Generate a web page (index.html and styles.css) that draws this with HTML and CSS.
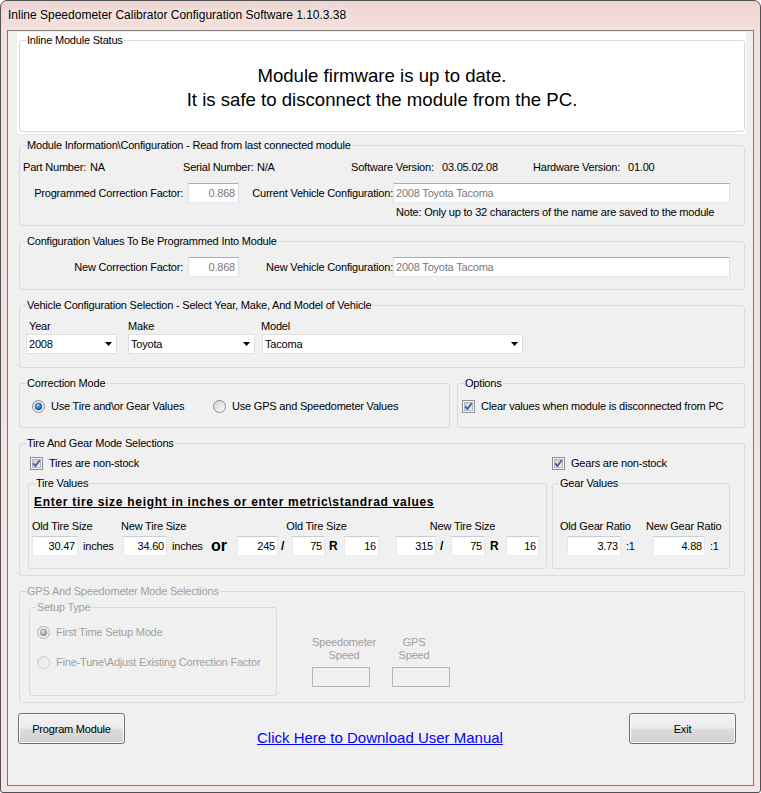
FILE: index.html
```html
<!DOCTYPE html>
<html>
<head>
<meta charset="utf-8">
<title>Inline Speedometer Calibrator Configuration Software</title>
<link rel="stylesheet" href="styles.css">
</head>
<body>
<svg class="defs" width="0" height="0" aria-hidden="true">
  <defs>
    <linearGradient id="cbFill" x1="0" y1="0" x2="1" y2="1">
      <stop offset="0" stop-color="#c4cad3"/>
      <stop offset="1" stop-color="#f2f4f7"/>
    </linearGradient>
    <linearGradient id="rbFill" x1="0" y1="0" x2="1" y2="1">
      <stop offset="0" stop-color="#d2d2d2"/>
      <stop offset="1" stop-color="#fcfcfc"/>
    </linearGradient>
    <linearGradient id="rbFillDis" x1="0" y1="0" x2="1" y2="1">
      <stop offset="0" stop-color="#e2e2e2"/>
      <stop offset="1" stop-color="#f8f8f8"/>
    </linearGradient>
    <radialGradient id="rbDot" cx="0.38" cy="0.32" r="0.75">
      <stop offset="0" stop-color="#9fdcfb"/>
      <stop offset="0.45" stop-color="#3b88d0"/>
      <stop offset="1" stop-color="#123f86"/>
    </radialGradient>
    <radialGradient id="rbDotDis" cx="0.38" cy="0.32" r="0.75">
      <stop offset="0" stop-color="#e4e4e4"/>
      <stop offset="0.5" stop-color="#b4b4b4"/>
      <stop offset="1" stop-color="#8c8c8c"/>
    </radialGradient>
  </defs>
</svg>

<div class="window">
  <div class="titlebar">Inline Speedometer Calibrator Configuration Software 1.10.3.38</div>

  <div class="client">

    <div class="status-panel">
      <fieldset class="grp status-grp">
        <legend>Inline Module Status</legend>
        <div class="status-msg">Module firmware is up to date.<br>It is safe to disconnect the module from the PC.</div>
      </fieldset>
    </div>

    <fieldset class="grp info-grp">
      <legend>Module Information\Configuration - Read from last connected module</legend>
      <div class="info-row1">
        <span>Part Number:</span><span>NA</span>
        <span>Serial Number:</span><span>N/A</span>
        <span>Software Version:</span><span>03.05.02.08</span>
        <span>Hardware Version:</span><span>01.00</span>
      </div>
      <div class="field-row info-fields">
        <label class="lbl-a">Programmed Correction Factor:</label>
        <input class="tb ro factor" readonly value="0.868">
        <label class="lbl-b">Current Vehicle Configuration:</label>
        <input class="tb ro config" readonly value="2008 Toyota Tacoma">
      </div>
      <div class="note">Note: Only up to 32 characters of the name are saved to the module</div>
    </fieldset>

    <fieldset class="grp cfg-grp">
      <legend>Configuration Values To Be Programmed Into Module</legend>
      <div class="field-row cfg-fields">
        <label class="lbl-a">New Correction Factor:</label>
        <input class="tb ro factor" readonly value="0.868">
        <label class="lbl-b">New Vehicle Configuration:</label>
        <input class="tb ro config" readonly value="2008 Toyota Tacoma">
      </div>
    </fieldset>

    <fieldset class="grp veh-grp">
      <legend>Vehicle Configuration Selection - Select Year, Make, And Model of Vehicle</legend>
      <div class="veh-row">
        <div class="veh-col year">
          <div class="veh-lbl">Year</div>
          <div class="combo"><span>2008</span><svg class="arrow" width="7" height="4" viewBox="0 0 7 4"><path d="M0 0H7L3.5 4Z" fill="#000"/></svg></div>
        </div>
        <div class="veh-col make">
          <div class="veh-lbl">Make</div>
          <div class="combo"><span>Toyota</span><svg class="arrow" width="7" height="4" viewBox="0 0 7 4"><path d="M0 0H7L3.5 4Z" fill="#000"/></svg></div>
        </div>
        <div class="veh-col model">
          <div class="veh-lbl">Model</div>
          <div class="combo"><span>Tacoma</span><svg class="arrow" width="7" height="4" viewBox="0 0 7 4"><path d="M0 0H7L3.5 4Z" fill="#000"/></svg></div>
        </div>
      </div>
    </fieldset>

    <div class="mode-row">
      <fieldset class="grp corr-grp">
        <legend>Correction Mode</legend>
        <div class="opt-row corr-opts">
          <div class="opt first-opt">
            <svg class="glyph" width="13" height="13" viewBox="0 0 13 13"><circle cx="6.5" cy="6.5" r="6" fill="url(#rbFill)" stroke="#8c8d8e"/><circle cx="6.5" cy="6.5" r="4.3" fill="#f6f6f6"/><circle cx="6.5" cy="6.5" r="3.4" fill="url(#rbDot)" stroke="#1d4a8a" stroke-width="0.6"/></svg>
            <span>Use Tire and\or Gear Values</span>
          </div>
          <div class="opt">
            <svg class="glyph" width="13" height="13" viewBox="0 0 13 13"><circle cx="6.5" cy="6.5" r="6" fill="url(#rbFill)" stroke="#8c8d8e"/><circle cx="6.5" cy="6.5" r="4" fill="url(#rbFill)" opacity="0.6"/></svg>
            <span>Use GPS and Speedometer Values</span>
          </div>
        </div>
      </fieldset>
      <fieldset class="grp opts-grp">
        <legend>Options</legend>
        <div class="opt-row opts-opts">
          <div class="opt">
            <svg class="glyph" width="13" height="13" viewBox="0 0 13 13"><rect x="0.5" y="0.5" width="12" height="12" fill="#f6f6f6" stroke="#8e8f8f"/><rect x="2.5" y="2.5" width="8" height="8" fill="url(#cbFill)" stroke="#b0b6be"/><path d="M3.2 6.4L5.4 9L9.8 3.2" fill="none" stroke="#3e5a96" stroke-width="1.7" stroke-linejoin="round"/></svg>
            <span>Clear values when module is disconnected from PC</span>
          </div>
        </div>
      </fieldset>
    </div>

    <fieldset class="grp tire-grp">
      <legend>Tire And Gear Mode Selections</legend>
      <div class="tg-cols">
        <div class="tg-left">
          <div class="cb-row tires-cb">
            <svg class="glyph" width="13" height="13" viewBox="0 0 13 13"><rect x="0.5" y="0.5" width="12" height="12" fill="#f6f6f6" stroke="#8e8f8f"/><rect x="2.5" y="2.5" width="8" height="8" fill="url(#cbFill)" stroke="#b0b6be"/><path d="M3.2 6.4L5.4 9L9.8 3.2" fill="none" stroke="#3e5a96" stroke-width="1.7" stroke-linejoin="round"/></svg>
            <span>Tires are non-stock</span>
          </div>
          <fieldset class="grp tv-grp">
            <legend>Tire Values</legend>
            <div class="bold-note">Enter tire size height in inches or enter metric\standrad values</div>
            <div class="tire-cols">
              <div class="tcol col-a">
                <div class="tlbl">Old Tire Size</div>
                <div class="tline"><input class="tb tin w46" value="30.47"><span class="unit">inches</span></div>
              </div>
              <div class="tcol col-b">
                <div class="tlbl">New Tire Size</div>
                <div class="tline"><input class="tb tin w44 shift2" value="34.60"><span class="unit">inches</span></div>
              </div>
              <div class="or">or</div>
              <div class="tcol col-c">
                <div class="tlbl center">Old Tire Size</div>
                <div class="tline"><input class="tb tin w41" value="245"><span class="sep slash">/</span><input class="tb tin w33" value="75"><span class="sep rr">R</span><input class="tb tin w35" value="16"></div>
              </div>
              <div class="tcol col-d">
                <div class="tlbl center shiftl">New Tire Size</div>
                <div class="tline"><input class="tb tin w40" value="315"><span class="sep slash2">/</span><input class="tb tin w34" value="75"><span class="sep rr2">R</span><input class="tb tin w33" value="16"></div>
              </div>
            </div>
          </fieldset>
        </div>
        <div class="tg-right">
          <div class="cb-row">
            <svg class="glyph" width="13" height="13" viewBox="0 0 13 13"><rect x="0.5" y="0.5" width="12" height="12" fill="#f6f6f6" stroke="#8e8f8f"/><rect x="2.5" y="2.5" width="8" height="8" fill="url(#cbFill)" stroke="#b0b6be"/><path d="M3.2 6.4L5.4 9L9.8 3.2" fill="none" stroke="#3e5a96" stroke-width="1.7" stroke-linejoin="round"/></svg>
            <span>Gears are non-stock</span>
          </div>
          <fieldset class="grp gv-grp">
            <legend>Gear Values</legend>
            <div class="gear-cols">
              <div class="tcol col-e">
                <div class="tlbl">Old Gear Ratio</div>
                <div class="tline"><input class="tb tin w54 shift7" value="3.73"><span class="ratio">:1</span></div>
              </div>
              <div class="tcol col-f">
                <div class="tlbl">New Gear Ratio</div>
                <div class="tline"><input class="tb tin w52 shift7" value="4.88"><span class="ratio">:1</span></div>
              </div>
            </div>
          </fieldset>
        </div>
      </div>
    </fieldset>

    <fieldset class="grp gps-grp disabled">
      <legend>GPS And Speedometer Mode Selections</legend>
      <div class="gps-row">
        <fieldset class="grp setup-grp">
          <legend>Setup Type</legend>
          <div class="opt setup-opt first">
            <svg class="glyph" width="13" height="13" viewBox="0 0 13 13"><circle cx="6.5" cy="6.5" r="6" fill="url(#rbFillDis)" stroke="#b4b4b4"/><circle cx="6.5" cy="6.5" r="4.3" fill="#f7f7f7"/><circle cx="6.5" cy="6.5" r="3.4" fill="url(#rbDotDis)" stroke="#8d8d8d" stroke-width="0.6"/></svg>
            <span>First Time Setup Mode</span>
          </div>
          <div class="opt setup-opt second">
            <svg class="glyph" width="13" height="13" viewBox="0 0 13 13"><circle cx="6.5" cy="6.5" r="6" fill="url(#rbFillDis)" stroke="#cdcdcd"/></svg>
            <span>Fine-Tune\Adjust Existing Correction Factor</span>
          </div>
        </fieldset>
        <div class="spd-col spd-a">
          <div class="spd-lbl wa">Speedometer<br>Speed</div>
          <input class="tb dis-in" disabled value="">
        </div>
        <div class="spd-col spd-b">
          <div class="spd-lbl wb">GPS<br>Speed</div>
          <input class="tb dis-in" disabled value="">
        </div>
      </div>
    </fieldset>

    <div class="btn-row">
      <button class="btn" type="button">Program Module</button>
      <a class="manual" href="#manual">Click Here to Download User Manual</a>
      <button class="btn exit" type="button">Exit</button>
    </div>

  </div>
</div>
</body>
</html>
```

FILE: styles.css
```css
* { box-sizing: border-box; }

html, body {
  margin: 0;
  padding: 0;
}

body {
  width: 761px;
  height: 793px;
  overflow: hidden;
  background: #ffffff;
  font-family: "Liberation Sans", Arial, sans-serif;
  font-size: 11px;
  line-height: 13px;
  letter-spacing: -0.2px;
  color: #000;
}

.defs {
  display: block;
  width: 0;
  height: 0;
  overflow: hidden;
}

/* ---------- window frame ---------- */
.window {
  width: 761px;
  height: 793px;
  border: 1px solid #4e5255;
  border-radius: 7px 7px 3px 3px;
  background: linear-gradient(#eed5d1 0px, #f4e0dd 30px, #f6e5e3 100%);
  display: flex;
  flex-direction: column;
}

.titlebar {
  height: 29px;
  padding: 7px 0 0 7px;
  font-size: 12px;
  line-height: 14px;
  letter-spacing: 0;
  color: #000;
  text-shadow: 0 0 6px rgba(255,255,255,0.9), 0 0 12px rgba(255,255,255,0.8);
  white-space: nowrap;
}

.client {
  margin: 0 6px;
  width: 747px;
  height: 756px;
  border: 1px solid #7b7b7b;
  background: #f0f0f0;
  display: flex;
  flex-direction: column;
}

/* ---------- group boxes ---------- */
.grp {
  margin: 9px 0 0 11px;
  width: 726px;
  min-width: 0;
  padding: 0;
  border: 1px solid #d5dce1;
  border-radius: 3px;
}

.grp > legend {
  margin-left: 6px;
  padding: 0 1px;
  font-size: 11px;
  line-height: 13px;
  height: 13px;
}

/* status */
.status-panel {
  margin: 1px 0 0 9px;
  width: 729px;
  height: 102px;
  background: #fff;
  padding: 2px 1px 0 2px;
}

.grp.status-grp {
  margin: 0;
  width: 726px;
  height: 98px;
}

.status-msg {
  margin-top: 17px;
  text-align: center;
  font-size: 18.6px;
  line-height: 24px;
  letter-spacing: 0;
}

/* module info */
.grp.info-grp {
  margin-top: 5px;
  height: 87px;
}

.info-row1 {
  display: grid;
  grid-template-columns: 67px 93px 74px 94px 91px 91px 95px auto;
  margin: 9px 0 0 3px;
  white-space: nowrap;
}

.field-row {
  display: flex;
  align-items: center;
  height: 20px;
}

.info-fields { margin-top: 9px; }
.cfg-fields { margin-top: 9px; }

.lbl-a {
  width: 163px;
  text-align: right;
  white-space: nowrap;
}

.lbl-b {
  width: 154px;
  text-align: right;
  white-space: nowrap;
}

.note {
  margin: 3px 0 0 376px;
  white-space: nowrap;
}

.cfg-grp { height: 55px; }

/* text boxes */
.tb {
  display: block;
  height: 20px;
  margin: 0;
  padding: 0 2px;
  font-family: "Liberation Sans", Arial, sans-serif;
  font-size: 11px;
  letter-spacing: -0.2px;
  color: #000;
  background: #fff;
  border: 1px solid;
  border-color: #abadb3 #dbdfe6 #e3e9ef #e2e3ea;
  border-radius: 0;
  outline: none;
}

.tb.ro { color: #7a7a7a; }

.factor {
  width: 51px;
  margin-left: 5px;
  text-align: right;
  padding-right: 3px;
}

.config {
  width: 337px;
}

/* vehicle selection */
.veh-grp { height: 69px; }

.veh-row {
  display: flex;
  margin-top: 8px;
}

.veh-col { display: flex; flex-direction: column; }
.veh-col.year { margin-left: 6px; width: 91px; }
.veh-col.make { margin-left: 11px; width: 127px; }
.veh-col.model { margin-left: 7px; width: 261px; }

.veh-lbl { height: 13px; }
.year .veh-lbl { padding-left: 3px; }
.model .veh-lbl { margin-left: -1px; }

.combo {
  margin-top: 1px;
  height: 20px;
  display: flex;
  align-items: center;
  background: #fff;
  border: 1px solid #dedede;
  padding-left: 2px;
}

.combo .arrow {
  margin-left: auto;
  margin-right: 4px;
  display: block;
}

/* correction mode / options */
.mode-row {
  display: flex;
  gap: 7px;
  margin: 9px 0 0 11px;
  height: 51px;
}

.mode-row .grp {
  margin: 0;
  height: 51px;
}

.corr-grp { width: 431px; }
.opts-grp { width: 288px; }

.opt-row {
  display: flex;
  align-items: center;
  height: 16px;
  margin-top: 8px;
}

.corr-opts { padding-left: 12px; }
.opts-opts { padding-left: 4px; }

.opt {
  display: flex;
  align-items: center;
  white-space: nowrap;
}

.opt .glyph, .cb-row .glyph {
  display: block;
  flex: none;
  margin-right: 6px;
}

.first-opt { width: 181px; }

/* tire and gear */
.tire-grp { height: 139px; }

.tg-cols {
  display: flex;
  gap: 5px;
  padding: 7px 0 0 8px;
}

.tg-left { width: 519px; }
.tg-right { width: 178px; }

.cb-row {
  display: flex;
  align-items: center;
  height: 13px;
  white-space: nowrap;
}

.tires-cb { padding-left: 2px; }

.grp.tv-grp, .grp.gv-grp {
  margin: 7px 0 0 0;
  height: 92px;
}

.grp.tv-grp { width: 519px; }
.grp.gv-grp { width: 178px; }

.bold-note {
  margin: 5px 0 0 5px;
  font-size: 12px;
  line-height: 14px;
  font-weight: bold;
  text-decoration: underline;
  letter-spacing: 0.7px;
  white-space: nowrap;
}

.tire-cols {
  display: flex;
  align-items: flex-end;
  margin: 11px 0 0 3px;
}

.gear-cols {
  display: flex;
  align-items: flex-end;
  margin: 30px 0 0 7px;
}

.tcol {
  display: flex;
  flex-direction: column;
}

.tlbl {
  height: 13px;
  white-space: nowrap;
}

.tlbl.center { text-align: center; }
.tlbl.shiftl { padding-right: 10px; }

.tline {
  display: flex;
  align-items: center;
  height: 20px;
  margin-top: 3px;
  white-space: nowrap;
}

.col-a { width: 89px; }
.col-b { width: 90px; }
.col-c { width: 159px; }
.col-d { width: 143px; }
.col-e { width: 86px; }
.col-f { width: 80px; }

.tb.tin {
  text-align: right;
  padding: 0 2px 0 0;
  border-color: #c9cdd3 #e4e7ec #eceff3 #e6e9ee;
}

.w33 { width: 33px; }
.w34 { width: 34px; }
.w35 { width: 35px; }
.w40 { width: 40px; }
.w41 { width: 41px; }
.w44 { width: 44px; }
.w46 { width: 46px; }
.w52 { width: 52px; }
.w54 { width: 54px; }

.shift2 { margin-left: 2px; }
.shift7 { margin-left: 7px; }

.unit { margin-left: 5px; }
.ratio { margin-left: 5px; }

.or {
  width: 26px;
  height: 20px;
  font-size: 16px;
  line-height: 20px;
  font-weight: bold;
  letter-spacing: 0;
}

.sep {
  font-size: 12px;
  font-weight: bold;
  line-height: 20px;
  letter-spacing: 0;
}

.slash { width: 14px; padding-left: 3px; }
.rr { width: 19px; padding-left: 4px; }
.slash2 { width: 15px; padding-left: 4px; }
.rr2 { width: 21px; padding-left: 5px; }

/* gps (disabled) */
.gps-grp { height: 118px; }

.disabled, .disabled legend { color: #a0a0a0; }

.gps-row {
  display: flex;
  align-items: flex-start;
  padding-left: 9px;
}

.grp.setup-grp {
  margin: 3px 0 0 0;
  width: 248px;
  height: 95px;
}

.setup-opt {
  height: 16px;
  padding-left: 7px;
}

.setup-opt.first { margin-top: 10px; }
.setup-opt.second { margin-top: 14px; }

.spd-col {
  display: flex;
  flex-direction: column;
  margin-top: 38px;
}

.spd-a { margin-left: 35px; }
.spd-b { margin-left: 16px; }

.spd-lbl {
  text-align: center;
  line-height: 13px;
}

.spd-lbl.wa { width: 64px; }
.spd-lbl.wb { width: 44px; }

.tb.dis-in {
  margin-top: 5px;
  width: 58px;
  background: #f0f0f0;
  border: 1px solid #b5b5b5;
}

/* bottom buttons */
.btn-row {
  display: flex;
  align-items: flex-start;
  margin: 10px 17px 0 10px;
}

.btn {
  width: 107px;
  height: 31px;
  margin: 0;
  padding: 0;
  font-family: "Liberation Sans", Arial, sans-serif;
  font-size: 11px;
  letter-spacing: -0.2px;
  color: #000;
  border: 1px solid #707070;
  border-radius: 3px;
  background: linear-gradient(#f3f3f3 0%, #ececec 48%, #dddddd 52%, #cfcfcf 100%);
  box-shadow: inset 0 0 0 1px #fbfbfb;
}

.exit { margin-left: auto; }

.manual {
  margin: 16px 0 0 132px;
  font-size: 15px;
  line-height: 17px;
  letter-spacing: 0;
  color: #0000ff;
  text-decoration: underline;
  white-space: nowrap;
}
```
